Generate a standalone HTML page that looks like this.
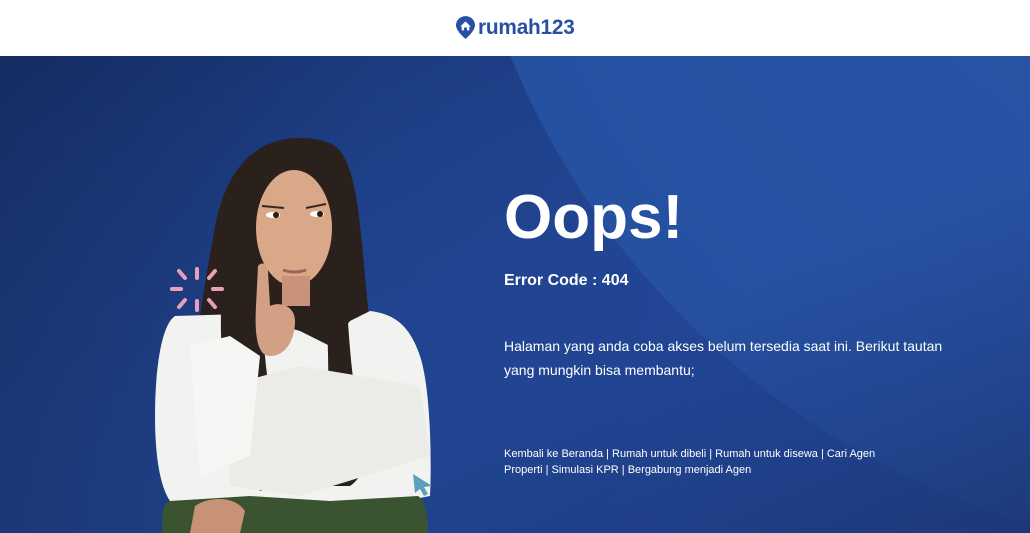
<!DOCTYPE html>
<html><head><meta charset="utf-8"><style>
*{margin:0;padding:0;box-sizing:border-box}
html,body{width:1030px;height:533px;overflow:hidden}
body{font-family:"Liberation Sans",Arial,sans-serif;background:#fff;position:relative}
.hdr{height:56px;background:#fff;position:relative}
.main{position:absolute;top:56px;left:0;width:1030px;height:477px;overflow:hidden;background:linear-gradient(100deg,#1a346e 0%,#20448f 35%,#23479a 100%)}
.t{position:absolute;color:#fff}
</style></head><body>
<div class="hdr">
<svg style="position:absolute;left:456px;top:16px" width="19" height="23" viewBox="0 0 20 24"><path d="M10 0C4.5 0 0 4.3 0 9.5c0 6.5 10 14.5 10 14.5s10-8 10-14.5C20 4.3 15.5 0 10 0z" fill="#2a4ea3"/><path d="M4.5 11L10 5.5 15.5 11 14 11 14 15 11.5 15 11.5 12 8.5 12 8.5 15 6 15 6 11z" fill="#fff"/></svg>
<div style="position:absolute;left:478px;top:16px;font-size:20.8px;font-weight:bold;color:#2a4ea3;letter-spacing:-0.2px">rumah123</div>
</div>
<div class="main">
<svg width="1030" height="477" style="position:absolute;left:0;top:0">
<defs><radialGradient id="g" cx="0.5" cy="0.5" r="0.5"><stop offset="0" stop-color="#2b57a8"/><stop offset="0.85" stop-color="#2751a2"/><stop offset="1" stop-color="#2650a0"/></radialGradient>
<linearGradient id="d" x1="0" y1="0" x2="1" y2="1"><stop offset="0" stop-color="#10275a" stop-opacity=".6"/><stop offset="0.5" stop-color="#1a3a7e" stop-opacity="0"/></linearGradient>
<linearGradient id="br" x1="0" y1="0" x2="1" y2="1"><stop offset="0.6" stop-color="#1b3a7e" stop-opacity="0"/><stop offset="1" stop-color="#1b3470" stop-opacity=".8"/></linearGradient></defs>
<rect width="1030" height="477" fill="url(#d)"/>
<circle cx="1250" cy="-300" r="798" fill="url(#g)"/>
<rect width="1030" height="477" fill="url(#br)"/>
<path d="M300 82C250 82 225 120 215 170 205 230 190 300 195 370 200 420 230 440 250 440L370 440C380 400 375 330 370 270 360 180 360 110 335 90 325 84 312 82 300 82z" fill="#2a201c"/>
<path d="M175 260C160 270 155 320 155 360 155 400 160 430 170 445L330 460 430 440C432 400 430 330 420 300 410 270 395 258 370 255L350 265 330 290 300 275 240 258z" fill="#f2f3f0"/>
<path d="M235 150C225 200 215 260 225 320 235 380 250 420 260 435L285 430C275 380 265 320 262 260 260 200 262 160 255 130z" fill="#2a201c"/>
<path d="M335 150C350 220 345 300 360 360 370 400 365 420 350 430L320 430C330 380 330 300 325 240z" fill="#2a201c"/>
<ellipse cx="294" cy="172" rx="38" ry="58" fill="#d9a889"/>
<rect x="282" y="220" width="28" height="30" fill="#c8937a"/>
<ellipse cx="273" cy="159" rx="7" ry="3" fill="#fff"/><circle cx="276" cy="159" r="3" fill="#2a1a15"/>
<ellipse cx="317" cy="158" rx="7" ry="3" fill="#fff"/><circle cx="320" cy="158" r="3" fill="#2a1a15"/>
<path d="M262 150L284 152M306 152L326 148" stroke="#3a2520" stroke-width="2"/>
<path d="M283 214Q295 218 306 214" stroke="#a06058" stroke-width="3" fill="none"/>
<path d="M258 210C262 205 268 208 268 215L270 250C280 245 295 250 295 265 295 285 285 300 270 300 255 300 255 270 256 250z" fill="#d3a085"/>
<path d="M225 330L300 310 420 330 430 400 300 440 230 430z" fill="#ebece8"/>
<path d="M190 290L230 280 260 300 250 400 200 420z" fill="#f6f7f4"/>
<path d="M170 445C162 448 162 460 162 477L428 477C428 460 426 445 418 440L330 445 250 440z" fill="#3a5330"/>
<path d="M195 450C210 440 235 440 245 455L240 477 190 477z" fill="#c89277"/>
<g stroke="#e8a0b8" stroke-width="4" stroke-linecap="round">
<line x1="197" y1="213" x2="197" y2="222"/><line x1="197" y1="245" x2="197" y2="254"/>
<line x1="172" y1="233" x2="181" y2="233"/><line x1="213" y1="233" x2="222" y2="233"/>
<line x1="179" y1="215" x2="185" y2="222"/><line x1="209" y1="244" x2="215" y2="251"/>
<line x1="215" y1="215" x2="209" y2="222"/><line x1="185" y1="244" x2="179" y2="251"/>
</g>
<path d="M413 418L432 430 424 431 428 438 424 440 420 433 415 437z" fill="#5aa0b8"/>
</svg>
<div class="t" style="left:504px;top:126px;font-size:62px;font-weight:bold;line-height:72px">Oops!</div>
<div class="t" style="left:504px;top:216px;font-size:16px;font-weight:bold">Error Code : 404</div>
<div class="t" style="left:504px;top:278px;font-size:14px;line-height:24px;width:460px">Halaman yang anda coba akses belum tersedia saat ini. Berikut tautan yang mungkin bisa membantu;</div>
<div class="t" style="left:504px;top:390px;font-size:11px;line-height:16px;width:410px">Kembali ke Beranda | Rumah untuk dibeli | Rumah untuk disewa | Cari Agen Properti | Simulasi KPR | Bergabung menjadi Agen</div>
</div>
</body></html>
